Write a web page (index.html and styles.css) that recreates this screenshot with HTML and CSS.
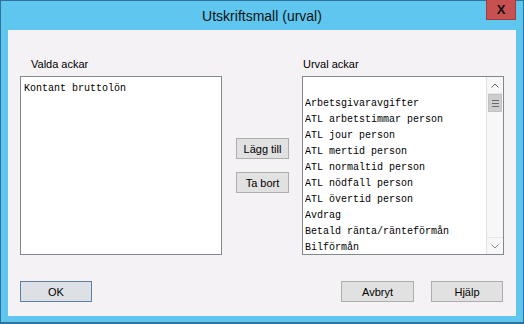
FILE: index.html
```html
<!DOCTYPE html>
<html lang="sv">
<head>
<meta charset="UTF-8">
<title>Utskriftsmall (urval)</title>
<link rel="stylesheet" href="styles.css">
</head>
<body>

<div class="window">

    <div class="titlebar">
        <div></div>
        <div class="title">Utskriftsmall (urval)</div>
        <div class="close">X</div>
    </div>

    <div class="client">

        <div class="lists">
            <div class="column">
                <div class="label left">Valda ackar</div>
                <div class="listbox">
                    <div class="items valda">
                        <div class="row">Kontant bruttolön</div>
                    </div>
                </div>
            </div>

            <div class="middle">
                <button class="btn small">Lägg till</button>
                <button class="btn small">Ta bort</button>
            </div>

            <div class="column">
                <div class="label">Urval ackar</div>
                <div class="listbox">
                    <div class="items urval">
                        <div class="row">&nbsp;</div>
                        <div class="row">Arbetsgivaravgifter</div>
                        <div class="row">ATL arbetstimmar person</div>
                        <div class="row">ATL jour person</div>
                        <div class="row">ATL mertid person</div>
                        <div class="row">ATL normaltid person</div>
                        <div class="row">ATL nödfall person</div>
                        <div class="row">ATL övertid person</div>
                        <div class="row">Avdrag</div>
                        <div class="row">Betald ränta/ränteförmån</div>
                        <div class="row">Bilförmån</div>
                    </div>
                    <div class="scrollbar">
                        <div class="arrow">
                            <svg width="8" height="5" viewBox="0 0 8 5"><path d="M0.5 4.5 L4 1 L7.5 4.5" fill="none" stroke="#606060" stroke-width="1"/></svg>
                        </div>
                        <div class="thumb">
                            <span></span><span></span><span></span>
                        </div>
                        <div class="track"></div>
                        <div class="arrow down">
                            <svg width="8" height="5" viewBox="0 0 8 5"><path d="M0.5 0.5 L4 4 L7.5 0.5" fill="none" stroke="#8a8a8a" stroke-width="1"/></svg>
                        </div>
                    </div>
                </div>
            </div>
        </div>

        <div class="footer">
            <button class="btn default">OK</button>
            <div class="spacer"></div>
            <button class="btn wide">Avbryt</button>
            <button class="btn">Hjälp</button>
        </div>

    </div>

</div>

</body>
</html>
```

FILE: styles.css
```css
:root{
    --frame:#5fc7ef;
    --frame-edge:#2f7498;
    --client:#f5f2f5;
    --list-border:#828790;
    --btn:#e1e1e1;
    --btn-border:#adadad;
}

*{
    box-sizing:border-box;
}

body{
    margin:0;
    background:var(--frame);
    font-family:"Liberation Sans", Arial, sans-serif;
    font-size:11px;
    color:#000;
}

/* window frame */
.window{
    width:524px;
    height:324px;
    border:1px solid var(--frame-edge);
    border-bottom-width:2px;
    background:var(--frame);
    padding:0 7px 6px;
    display:flex;
    flex-direction:column;
}

/* title bar */
.titlebar{
    height:29px;
    display:grid;
    grid-template-columns:1fr auto 1fr;
    align-items:center;
}

.title{
    font-size:14px;
    color:#111;
    padding-top:1px;
}

.close{
    justify-self:end;
    align-self:start;
    width:30px;
    height:20px;
    margin-top:-1px;
    background:#c75050;
    border:1px solid #a03c3c;
    border-top:none;
    color:#111;
    font-weight:bold;
    font-size:13px;
    display:flex;
    align-items:center;
    justify-content:center;
}

/* client area */
.client{
    flex:1;
    background:var(--client);
    padding:28px 12px 0 12px;
}

.lists{
    display:flex;
}

.column{
    width:202px;
}

.label{
    line-height:13px;
    height:13px;
    margin-bottom:5px;
    padding-left:1px;
}

.label.left{
    padding-left:11px;
}

.listbox{
    height:179px;
    border:1px solid var(--list-border);
    background:#fff;
    display:flex;
    overflow:hidden;
}

.items{
    flex:1;
    font-family:"Liberation Mono", "Courier New", monospace;
    font-size:10px;
    line-height:16px;
    white-space:nowrap;
    overflow:hidden;
}

.items.valda{
    padding:4px 0 0 3px;
}

.items.urval{
    padding:3px 0 0 2px;
}

/* scrollbar */
.scrollbar{
    width:17px;
    border-left:1px solid #e3e3e3;
    background:#f7f7f7;
    display:flex;
    flex-direction:column;
}

.arrow{
    height:17px;
    display:flex;
    align-items:center;
    justify-content:center;
    border-bottom:1px solid #e6e6e6;
}

.arrow.down{
    border-bottom:none;
    border-top:1px solid #e6e6e6;
}

.thumb{
    height:18px;
    margin:0 1px;
    background:#cdcdcd;
    border:1px solid #c2c2c2;
    display:flex;
    flex-direction:column;
    align-items:center;
    justify-content:center;
    gap:2px;
}

.thumb span{
    width:7px;
    height:1px;
    background:#6a6a6a;
}

.track{
    flex:1;
}

/* buttons */
.btn{
    width:72px;
    height:21px;
    padding:0;
    background:var(--btn);
    border:1px solid var(--btn-border);
    font-family:"Liberation Sans", Arial, sans-serif;
    font-size:11px;
    color:#000;
}

.btn.wide{
    width:73px;
    margin-right:17px;
}

.btn.default{
    border-color:#5f7fa3;
    background:#dde0e4;
}

.middle{
    width:80px;
    padding:80px 0 0 14px;
    display:flex;
    flex-direction:column;
    gap:13px;
}

.btn.small{
    width:53px;
}

.footer{
    display:flex;
    margin-top:26px;
    padding-right:1px;
}

.spacer{
    flex:1;
}
```
